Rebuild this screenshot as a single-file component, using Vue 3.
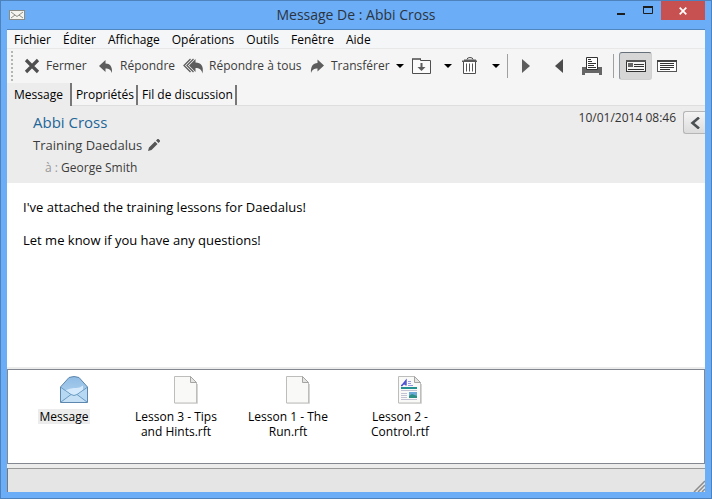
<script setup>
const menus = ['Fichier', 'Éditer', 'Affichage', 'Opérations', 'Outils', 'Fenêtre', 'Aide']
const tabs = ['Message', 'Propriétés', 'Fil de discussion']
const files = [
  { name: 'Message', kind: 'mail' },
  { name: 'Lesson 3 - Tips and Hints.rft', kind: 'blank' },
  { name: 'Lesson 1 - The Run.rft', kind: 'blank' },
  { name: 'Lesson 2 - Control.rtf', kind: 'rich' },
]
</script>

<template>
  <div class="window">
    <header class="titlebar">
      <svg class="app-icon" width="16" height="10" viewBox="0 0 16 10">
        <rect x=".5" y=".5" width="15" height="9" fill="#f4f4f0" stroke="#8b8b86" />
        <path d="M2 2 L8 6.500 L14 2 M2 8 L6 5 M14 8 L10 5" fill="none" stroke="#8e8e88" />
      </svg>
      <h1>Message De : Abbi Cross</h1>
      <div class="controls">
        <button class="ctl" aria-label="Réduire"><svg width="10" height="10"><rect x="1" y="8" width="8" height="2" fill="#1e1e1e" /></svg></button>
        <button class="ctl" aria-label="Agrandir"><svg width="10" height="8"><path d="M.5 1V7.500H9.500V1" fill="none" stroke="#1e1e1e" /><rect width="10" height="2" fill="#1e1e1e" /></svg></button>
        <button class="ctl close" aria-label="Fermer la fenêtre"><svg width="8" height="8" viewBox="0 0 8 8"><path d="M.7 .7 7.300 7.300M7.300 .7 .7 7.300" stroke="#fff" stroke-width="1.700" /></svg></button>
      </div>
    </header>

    <main class="client">
      <nav class="menubar"><button v-for="m in menus" :key="m">{{ m }}</button></nav>

      <div class="toolbar">
        <span class="grip"></span>
        <button class="tool fermer">
          <svg width="16" height="16" viewBox="0 0 16 16"><path d="M2 2 14 14M14 2 2 14" stroke="#4f4f4f" stroke-width="3.200" /></svg>Fermer
        </button>
        <button class="tool reply">
          <svg width="16" height="16" viewBox="0 0 16 16"><path d="M1 8 7.500 2V5.500C12 5.500 14.500 8.500 14 15C12.500 11.500 11 10.500 7.500 10.500V14Z" fill="#5d5d5d" /></svg>Répondre
        </button>
        <button class="tool reply-all">
          <svg width="22" height="16" viewBox="0 0 22 16"><path d="M6 7.500 12.500 1V4.500C18 4.500 21 8 19.500 15.500C18.500 11.500 16.500 10 12.500 10V14Z" fill="#5d5d5d" /><path d="M7.500 1 1 7.500 7.500 14M10.500 1 4 7.500 10.500 14" fill="none" stroke="#5d5d5d" stroke-width="1.300" /></svg>Répondre à tous
        </button>
        <button class="tool forward">
          <svg width="16" height="16" viewBox="0 0 16 16"><path d="M15 7.500 8.500 1.500V5C4 5 1.500 8.500 2 15C3.500 11.500 5 10.500 8.500 10.500V13.500Z" fill="#5d5d5d" /></svg>Transférer
        </button>
        <button class="drop" aria-label="Options de transfert"><svg width="8" height="4"><path d="M0 0H8L4 4Z" /></svg></button>
        <button class="tool folder" aria-label="Déplacer">
          <svg width="20" height="18" viewBox="0 0 20 18"><path d="M.5 16.500V1.500H8.500V3.500H18.500V16.500Z" fill="#fbfbfb" stroke="#4f4f4f" /><path d="M1 1H8V3H1Z" fill="#777" /><path d="M8.500 6H10.500V10H13.500L9.500 14 5.500 10H8.500Z" fill="#5d5d5d" /></svg>
        </button>
        <button class="drop" aria-label="Options de déplacement"><svg width="8" height="4"><path d="M0 0H8L4 4Z" /></svg></button>
        <button class="tool trash" aria-label="Supprimer">
          <svg width="16" height="18" viewBox="0 0 16 18"><path d="M5 2.500Q5 .5 8 .5T11 2.500" fill="none" stroke="#4f4f4f" /><path d="M2 2.500H14V3.500H15V5H0V3.500H2Z" fill="#5a5a5a" /><path d="M1.500 5V16.500H13.500V5" fill="#fff" stroke="#4f4f4f" /><path d="M4.500 6.500V14.500M7.500 6.500V14.500M10.500 6.500V14.500" stroke="#555" /></svg>
        </button>
        <button class="drop" aria-label="Options de suppression"><svg width="8" height="4"><path d="M0 0H8L4 4Z" /></svg></button>
        <span class="sep"></span>
        <button class="tool next" aria-label="Suivant"><svg width="8" height="16"><path d="M0 1 8 8 0 15Z" fill="#5d5d5d" /></svg></button>
        <button class="tool prev" aria-label="Précédent"><svg width="8" height="16"><path d="M8 1 0 8 8 15Z" fill="#4c4c4c" /></svg></button>
        <button class="tool print" aria-label="Imprimer">
          <svg width="20" height="18" viewBox="0 0 20 18"><path d="M0 10H20V18H17V16H3V18H0Z" fill="#666" /><path d="M4.500 12.500V.5H15.500V12.500Z" fill="#fff" stroke="#333" /><path d="M6 2.500H9M6 4.500H10M6 6.500H14M6 8.500H12M6 10.500H14" stroke="#333" /></svg>
        </button>
        <span class="sep"></span>
        <button class="tool view on" aria-label="Aperçu avec en-tête" aria-pressed="true">
          <svg width="20" height="12" viewBox="0 0 20 12"><rect x=".5" y=".5" width="19" height="11" fill="#f5f5f5" stroke="#333" /><path d="M0 1H20" stroke="#555" stroke-width="2" /><rect x="2" y="3" width="5" height="4" fill="#666" /><path d="M8 4.500H18M8 6.500H18M2 9.500H18" stroke="#333" /></svg>
        </button>
        <button class="tool view" aria-label="Texte seul" aria-pressed="false">
          <svg width="20" height="12" viewBox="0 0 20 12"><rect x=".5" y=".5" width="19" height="11" fill="#fff" stroke="#555" /><path d="M0 1H20" stroke="#444" stroke-width="2" /><path d="M3 3.500H17M3 5.500H17M3 7.500H17M3 9.500H13" stroke="#333" /></svg>
        </button>
      </div>

      <div class="tabs" role="tablist">
        <button v-for="(t, i) in tabs" :key="t" role="tab" :aria-selected="i === 0" :class="{ active: i === 0 }">{{ t }}</button>
      </div>

      <section class="summary">
        <div class="who">
          <h2><a href="#">Abbi Cross</a></h2>
          <div class="subject">Training Daedalus
            <svg width="12" height="12" viewBox="0 0 12 12"><path d="M0 12 1 8.500 7 2.500 9.500 5 3.500 11ZM8 1.500 9.500 0H10.500L12 1.500V2.500L10.500 4Z" fill="#555" /></svg>
          </div>
          <div class="to"><span>à :</span> George Smith</div>
        </div>
        <time>10/01/2014 08:46</time>
        <button class="collapse" aria-label="Afficher le panneau"><svg width="10" height="12" viewBox="0 0 10 12"><path d="M9 .5 2.500 6 9 11.500" fill="none" stroke="#4a4f52" stroke-width="2.600" /></svg></button>
      </section>

      <article class="body">
        <p>I've attached the training lessons for Daedalus!</p>
        <p>Let me know if you have any questions!</p>
      </article>

      <section class="attachments">
        <button v-for="(f, i) in files" :key="f.name" class="file" :class="{ selected: i === 0 }">
          <svg v-if="f.kind === 'mail'" width="30" height="28" viewBox="0 0 30 28">
            <defs><linearGradient id="env" x1="0" y1="0" x2="0" y2="1"><stop offset="0" stop-color="#8fbbe4" /><stop offset="1" stop-color="#b9d9f1" /></linearGradient></defs>
            <path d="M1.500 11 10 1.500Q15 -.5 20 1.500L28.500 11V26.500H1.500Z" fill="url(#env)" stroke="#5d87ac" />
            <path d="M2 11.500 12 19H18L28 11.500V26H2Z" fill="#b6d8f2" />
            <path d="M6 14.500Q12 11.500 16 12T24 9.500V15L18 19Q15 20 12 19L6 15Z" fill="#d4eafc" />
            <path d="M2 26 12 18.500Q15 20.500 18 18.500L28 26Z" fill="#c5e0f5" />
            <path d="M2 11.500 12 18.500Q15 20.500 18 18.500L28 11.500M2 26 12 18.500M28 26 18 18.500" fill="none" stroke="#6a9ac2" />
          </svg>
          <svg v-else width="24" height="28" viewBox="0 0 24 28">
            <path d="M.5 .5H16.500L22.500 6.500V27H.5Z" fill="#f9f9f8" stroke="#bdbdbb" />
            <path d="M23.500 8V27.500H1" fill="none" stroke="#d5d5d3" />
            <path d="M16.500 .5V6.500H22.500Z" fill="#e5e5e4" stroke="#a5a5a3" />
            <g v-if="f.kind === 'rich'">
              <path d="M3 9.500H4L8 4.500V9.500M5 8H8" fill="none" stroke="#4950cf" stroke-width="1.400" />
              <path d="M10 5.500H13M10 7.500H13M10 9.500H15" stroke="#9595e2" />
              <rect x="3" y="11" width="16" height="2" fill="#23918f" />
              <path d="M3 14.500H19M3 17.500H9M3 19.500H9M3 21.500H9M3 23.500H19" stroke="#c3c3d6" />
              <rect x="11" y="16" width="8" height="6" fill="#6aa9d8" /><path d="M11 22V20L14 18 19 20V22Z" fill="#2c8f83" />
            </g>
          </svg>
          <span>{{ f.name }}</span>
        </button>
      </section>

      <footer class="status"><svg width="12" height="12" viewBox="0 0 12 12"><path d="M1 12 12 1M5 12 12 5M9 12 12 9" stroke="#8c8c8c" stroke-width="1.500" /></svg></footer>
    </main>
  </div>
</template>

<style>
body { margin: 0; }
</style>

<style scoped>
* { box-sizing: border-box; }
.window {
  display: flex;
  flex-direction: column;
  min-height: 100vh;
  padding: 0 6px 6px;
  border: 1px solid #4d82bc;
  background: #6badf6;
  color: #000;
  font: 12px/16px "Open Sans", "Noto Sans", sans-serif;
}
button { margin: 0; padding: 0; border: 0; background: none; color: inherit; font: inherit; white-space: nowrap; }
svg { display: block; flex: none; }
.titlebar { display: grid; grid-template-columns: 100px 1fr 100px; height: 28px; }
.app-icon { margin: 9px 0 0 2px; }
h1 { margin: 0; text-align: center; font-size: 14px; line-height: 27px; font-weight: 400; color: #2b3440; }
.controls { display: flex; justify-content: flex-end; align-items: flex-start; }
.ctl { display: flex; align-items: center; justify-content: center; width: 27px; height: 18px; }
.ctl.close { width: 44px; height: 19px; background: #c75050; }
.client { flex: 1; display: flex; flex-direction: column; border-top: 1px solid #4f86c0; background: #ececec; }
.menubar { display: flex; gap: 12px; height: 19px; padding: 1px 7px 0; background: #f5f6f7; border-bottom: 1px solid #e8e8e8; }
.toolbar { display: flex; align-items: center; height: 34px; padding-left: 4px; background: #f5f5f5; color: #3c3c3c; }
.grip { width: 2px; height: 30px; margin-right: 11px; background: repeating-linear-gradient(#b5b5b5 0 2px, transparent 2px 4px); }
.tool { display: flex; flex: none; align-items: center; gap: 6px; }
.fermer { width: 74px; }
.reply { width: 85px; }
.reply-all { width: 126px; gap: 4px; }
.forward { width: 87px; }
.drop { flex: none; width: 16px; }
.folder { width: 32px; }
.trash { width: 32px; padding-left: 2px; }
.sep { flex: none; width: 1px; height: 24px; margin-left: -1px; background: #a0a0a0; }
.next, .prev { width: 33px; }
.next { margin-left: 14px; }
.print { width: 32px; margin-left: -6px; }
.view { justify-content: center; width: 33px; height: 28px; border: 1px solid transparent; border-radius: 3px; }
.view.on { margin-left: 5px; border-color: #66707a #d0d0d0 #d0d0d0 #8e959c; background: #d6d6d6; }
.view:last-child { margin-left: -2px; }
.tabs { display: flex; height: 23px; background: #f5f5f5; border-bottom: 1px solid #dedede; }
.tabs button { height: 20px; margin-top: 2px; padding: 0 2px 0 4px; border-right: 2px solid #777; }
.tabs .active { height: 23px; margin-top: 0; padding: 0 7px; background: #ececec; }
.summary { display: flex; height: 77px; }
.who { flex: 1; padding: 6px 0 0 26px; color: #3c3c3c; }
h2 { margin: 0; font-size: 15px; line-height: 20px; font-weight: 400; }
h2 a { color: #1f6699; text-decoration: none; }
.subject { display: flex; align-items: center; gap: 6px; font-size: 13px; line-height: 26px; }
.to { padding: 0 0 0 12px; line-height: 20px; }
.to span { color: #999; }
time { margin: 4px 7px 0 0; color: #333; }
.collapse { display: flex; align-items: center; justify-content: center; width: 22px; height: 23px; margin-top: 5px; border: 1px solid #b5b5b5; border-right: 0; border-radius: 3px 0 0 3px; background: linear-gradient(#f4f4f4, #dcdcdc); }
.body { flex: 1; padding: 16px; background: #fff; font-size: 13px; }
.body p { margin: 0 0 17px; }
.attachments { display: flex; min-height: 95px; margin-top: 2px; padding: 6px 0; border: 1px solid #828790; background: #fff; }
.file { display: flex; flex-direction: column; align-items: center; gap: 5px; width: 112px; line-height: 15px; white-space: normal; }
.file svg { margin-left: 20px; }
.file span { max-width: 90px; padding: 0 2px; }
.file.selected span { background: #ececec; }
.status { display: flex; justify-content: flex-end; align-items: flex-end; height: 24px; margin-top: 4px; border-top: 1px solid #999; border-left: 1px solid #777; background: #e5e5e5; }
</style>
